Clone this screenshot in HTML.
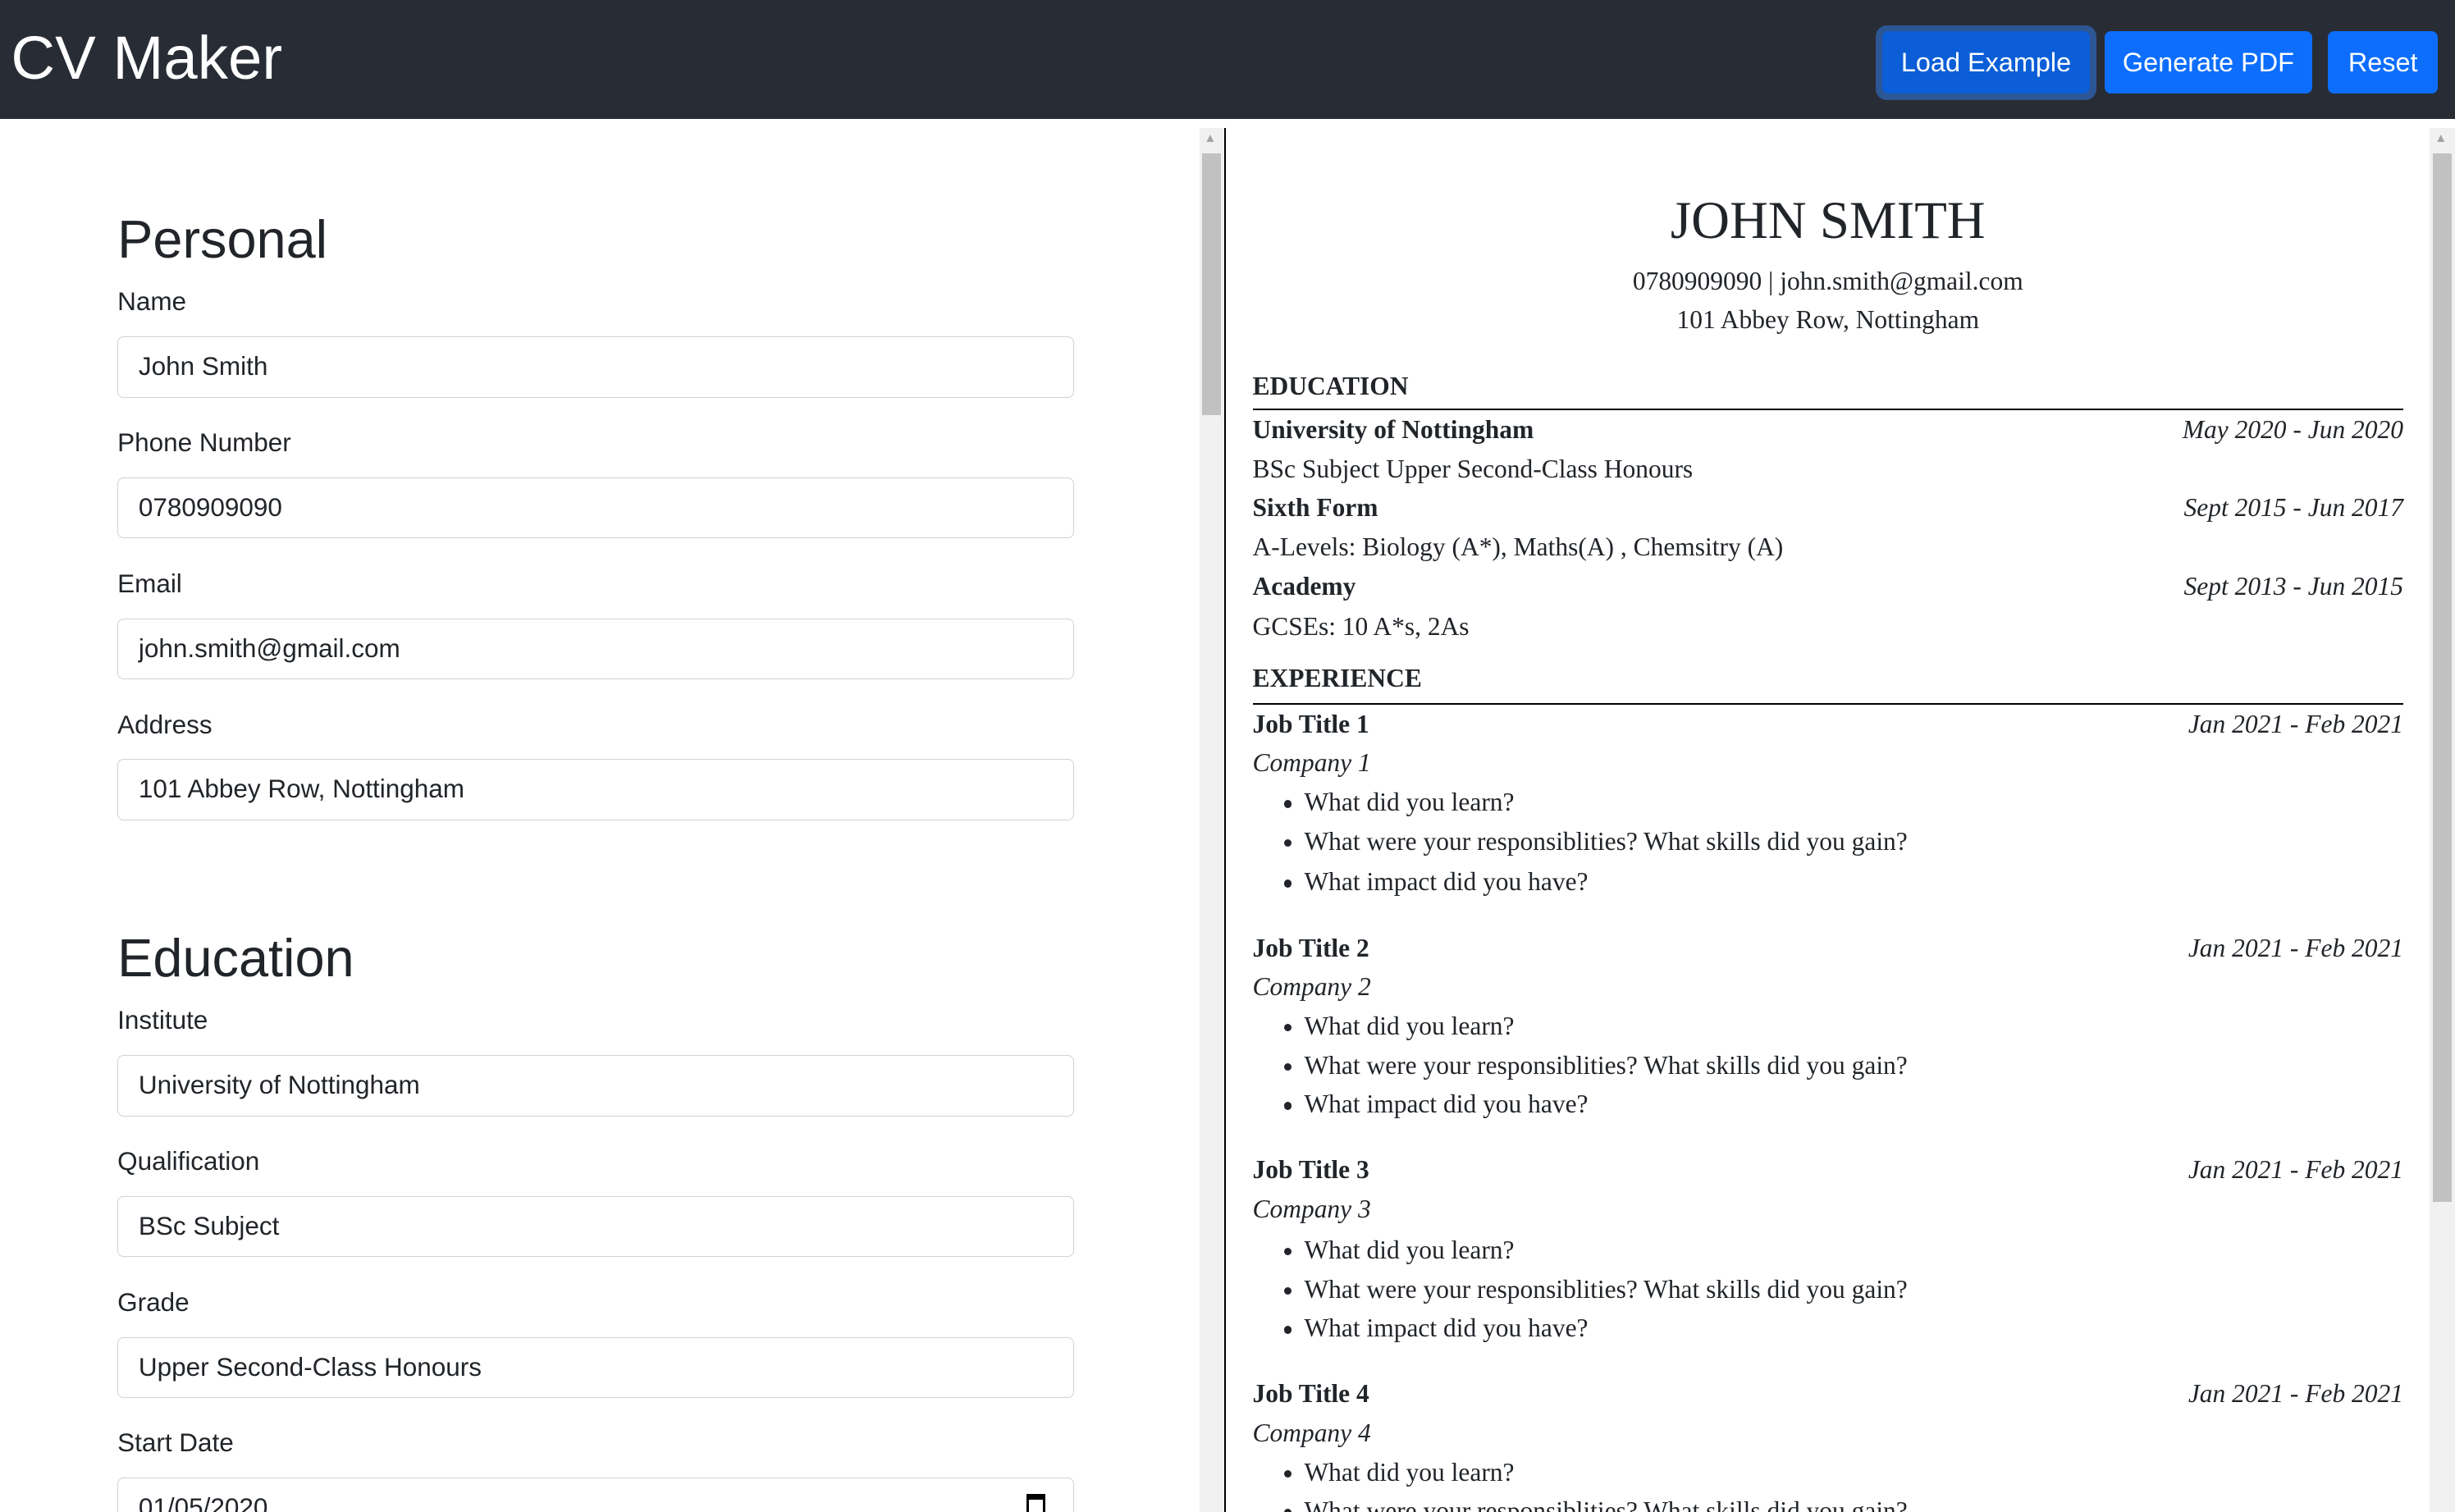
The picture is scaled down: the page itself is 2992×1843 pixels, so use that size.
<!DOCTYPE html>
<html><head><meta charset="utf-8"><style>
html,body{margin:0;padding:0;overflow:hidden;background:#fff}
#w{zoom:1.90816;width:1568px;height:966px;position:relative;overflow:hidden;font-family:"Liberation Sans","DejaVu Sans",sans-serif;color:#212529}
.a{position:absolute;white-space:nowrap}
.nav{left:0;top:0;width:1568px;height:76px;background:#282c34}
.btn{position:absolute;background:#0d6efd;color:#fff;border-radius:4px;font-size:17px;text-align:center;line-height:40px;height:40px;top:20px}
.lbl{position:absolute;left:75px;font-size:16.5px;line-height:24px}
.in{position:absolute;left:75px;width:597px;height:38px;border:1px solid #ced4da;border-radius:4px;font-size:16.5px;line-height:38px;padding-left:13px;box-sizing:content-box}
.h{position:absolute;left:75px;font-size:34px;line-height:40px}
.r{position:absolute;left:800px;width:735px;height:25px;line-height:25px;font-family:"Liberation Serif",serif;font-size:16.5px;color:#212529;white-space:nowrap}
.r .d{position:absolute;right:0;top:0;font-style:italic}
.b{font-weight:bold}
.i{font-style:italic}
.li{padding-left:33px;position:absolute}
.li:before{content:"";position:absolute;left:20px;top:11px;width:5px;height:5px;border-radius:50%;background:#212529}
.sec{font-weight:bold}
.rule{position:absolute;left:800px;width:735px;height:1px;background:#000}
</style></head><body><div id="w">
<div class="a nav"></div>
<div class="a" style="left:7px;top:12px;font-size:39px;line-height:50px;color:#fff">CV Maker</div>
<div class="a" style="left:1198px;top:16px;width:141px;height:48px;border-radius:7px;background:#2d5694"></div>
<div class="btn" style="left:1202px;width:133px;background:#0b5ed7">Load Example</div>
<div class="btn" style="left:1344px;width:133px">Generate PDF</div>
<div class="btn" style="left:1487px;width:70px">Reset</div>

<div class="a" style="left:766px;top:82px;width:16px;height:884px;background:#f1f1f1"></div>
<div class="a" style="left:768px;top:98px;width:12px;height:167px;background:#c1c1c1"></div>
<div class="a" style="left:769px;top:84px;font-size:8px;color:#a3a3a3">▲</div>
<div class="a" style="left:782px;top:82px;width:1px;height:884px;background:#000"></div>
<div class="a" style="left:1552px;top:82px;width:16px;height:884px;background:#f1f1f1"></div>
<div class="a" style="left:1554px;top:98px;width:12px;height:670px;background:#c1c1c1"></div>
<div class="a" style="left:1555px;top:84px;font-size:8px;color:#a3a3a3">▲</div>

<div class="h" style="top:133px">Personal</div>
<div class="lbl" style="top:181px">Name</div>
<div class="in" style="top:215px">John Smith</div>
<div class="lbl" style="top:271px">Phone Number</div>
<div class="in" style="top:305px">0780909090</div>
<div class="lbl" style="top:361px">Email</div>
<div class="in" style="top:395px">john.smith@gmail.com</div>
<div class="lbl" style="top:451px">Address</div>
<div class="in" style="top:485px">101 Abbey Row, Nottingham</div>
<div class="h" style="top:592px">Education</div>
<div class="lbl" style="top:640px">Institute</div>
<div class="in" style="top:674px">University of Nottingham</div>
<div class="lbl" style="top:730px">Qualification</div>
<div class="in" style="top:764px">BSc Subject</div>
<div class="lbl" style="top:820px">Grade</div>
<div class="in" style="top:854px">Upper Second-Class Honours</div>
<div class="lbl" style="top:910px">Start Date</div>
<div class="in" style="top:944px">01/05/2020<span style="position:absolute;right:18px;top:10px;width:12px;height:13px;border:2px solid #000;border-top-width:4px;box-sizing:border-box"></span></div>

<div class="a" style="left:783px;width:769px;top:120px;text-align:center;font-family:'Liberation Serif',serif;font-size:34px;line-height:42px">JOHN SMITH</div>
<div class="a" style="left:783px;width:769px;top:167px;text-align:center;font-family:'Liberation Serif',serif;font-size:16.5px;line-height:25px">0780909090 | john.smith@gmail.com</div>
<div class="a" style="left:783px;width:769px;top:192px;text-align:center;font-family:'Liberation Serif',serif;font-size:16.5px;line-height:25px">101 Abbey Row, Nottingham</div>

<div class="r sec" style="top:234px">EDUCATION</div>
<div class="rule" style="top:261px"></div>
<div class="r" style="top:262px"><span class="b">University of Nottingham</span><span class="d">May 2020 - Jun 2020</span></div>
<div class="r" style="top:287px">BSc Subject Upper Second-Class Honours</div>
<div class="r" style="top:312px"><span class="b">Sixth Form</span><span class="d">Sept 2015 - Jun 2017</span></div>
<div class="r" style="top:337px">A-Levels: Biology (A*), Maths(A) , Chemsitry (A)</div>
<div class="r" style="top:362px"><span class="b">Academy</span><span class="d">Sept 2013 - Jun 2015</span></div>
<div class="r" style="top:388px">GCSEs: 10 A*s, 2As</div>
<div class="r sec" style="top:421px">EXPERIENCE</div>
<div class="rule" style="top:449px"></div>

<div class="r" style="top:450px"><span class="b">Job Title 1</span><span class="d">Jan 2021 - Feb 2021</span></div>
<div class="r i" style="top:475px">Company 1</div>
<div class="r li" style="top:500px">What did you learn?</div>
<div class="r li" style="top:525px">What were your responsiblities? What skills did you gain?</div>
<div class="r li" style="top:551px">What impact did you have?</div>

<div class="r" style="top:593px"><span class="b">Job Title 2</span><span class="d">Jan 2021 - Feb 2021</span></div>
<div class="r i" style="top:618px">Company 2</div>
<div class="r li" style="top:643px">What did you learn?</div>
<div class="r li" style="top:668px">What were your responsiblities? What skills did you gain?</div>
<div class="r li" style="top:693px">What impact did you have?</div>

<div class="r" style="top:735px"><span class="b">Job Title 3</span><span class="d">Jan 2021 - Feb 2021</span></div>
<div class="r i" style="top:760px">Company 3</div>
<div class="r li" style="top:786px">What did you learn?</div>
<div class="r li" style="top:811px">What were your responsiblities? What skills did you gain?</div>
<div class="r li" style="top:836px">What impact did you have?</div>

<div class="r" style="top:878px"><span class="b">Job Title 4</span><span class="d">Jan 2021 - Feb 2021</span></div>
<div class="r i" style="top:903px">Company 4</div>
<div class="r li" style="top:928px">What did you learn?</div>
<div class="r li" style="top:953px">What were your responsiblities? What skills did you gain?</div>
</div></body></html>
